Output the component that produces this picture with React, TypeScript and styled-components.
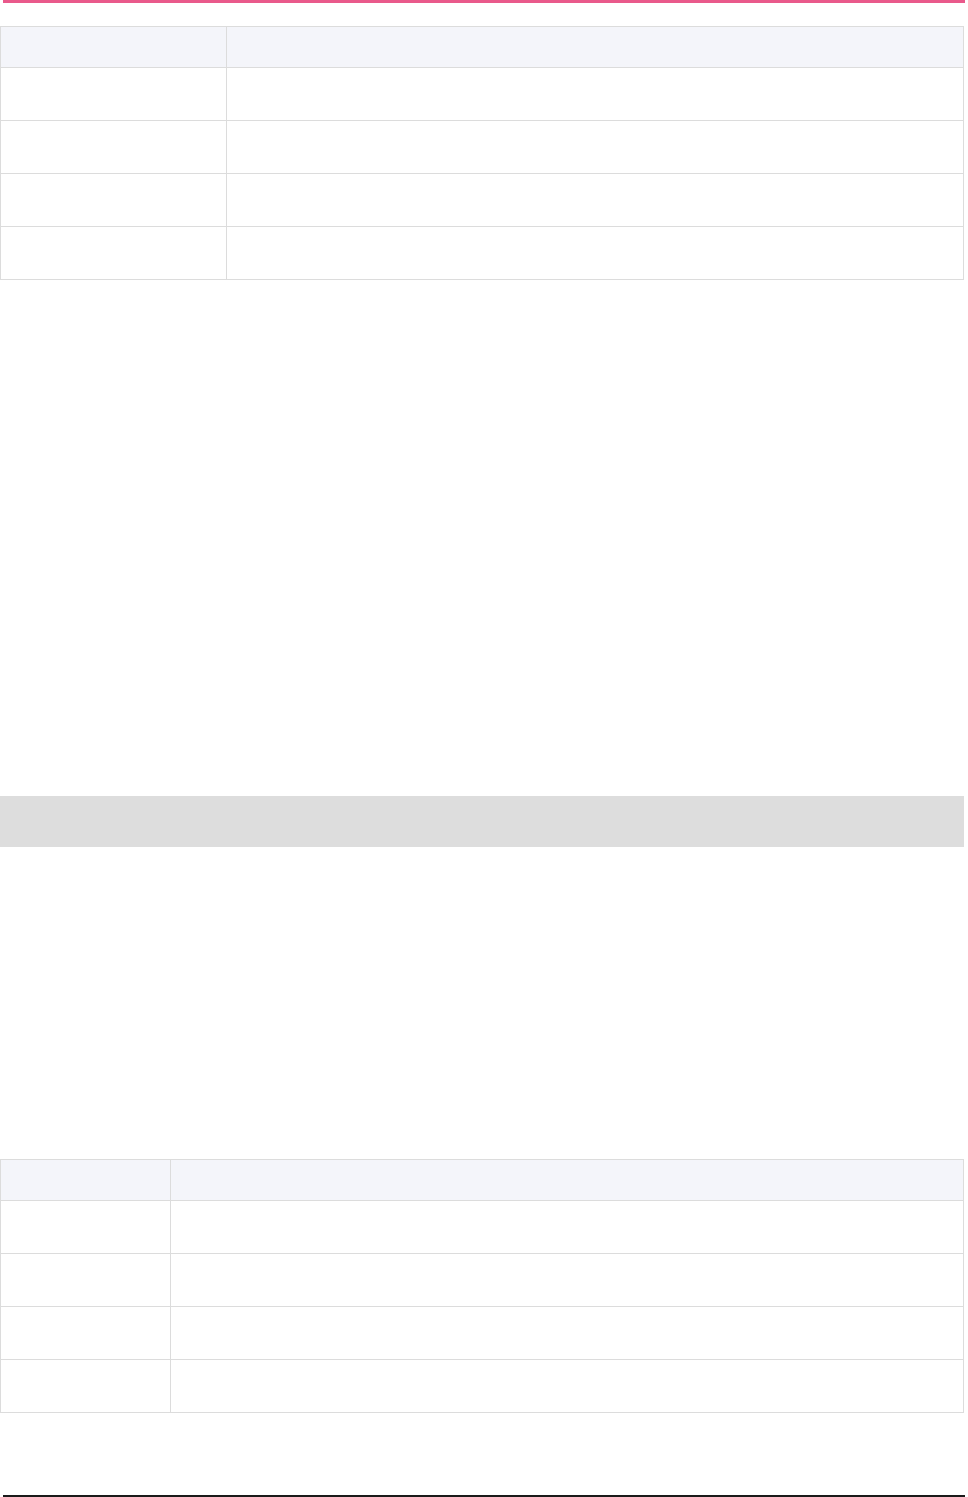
import React from "react";
import styled, { createGlobalStyle } from "styled-components";

const GlobalStyle = createGlobalStyle`
  html, body {
    margin: 0;
    padding: 0;
    background: #fff;
    font-family: "Inter", "Liberation Sans", sans-serif;
  }
`;

const Page = styled.div`
  width: 968px;
  display: flex;
  flex-direction: column;
`;

const AccentBar = styled.div`
  height: 3px;
  margin: 0 3px;
  background-color: #e9598b;
`;

const Table = styled.div<{ $first: number; $top: number }>`
  display: grid;
  grid-template-columns: ${(p) => p.$first}px 1fr;
  width: 964px;
  box-sizing: border-box;
  margin-top: ${(p) => p.$top}px;
  border-top: 1px solid #dcdcdc;
  border-left: 1px solid #dcdcdc;
`;

const Cell = styled.div<{ $head?: boolean }>`
  box-sizing: border-box;
  height: ${(p) => (p.$head ? 41 : 53)}px;
  border-right: 1px solid #dcdcdc;
  border-bottom: 1px solid #dcdcdc;
  background-color: ${(p) => (p.$head ? "#f4f5fa" : "#fff")};
  font-size: 14px;
  color: #333;
`;

const Banner = styled.div`
  width: 964px;
  height: 51px;
  margin-top: 516px;
  background-color: #dddddd;
`;

const Rule = styled.div`
  height: 2px;
  margin: 82px 3px 0;
  background-color: #1a1a1a;
`;

interface GridProps {
  first: number;
  top: number;
  rows: number;
}

const DataTable: React.FC<GridProps> = ({ first, top, rows }) => {
  const body = Array.from({ length: rows });
  return (
    <Table $first={first} $top={top}>
      <Cell $head />
      <Cell $head />
      {body.map((_, i) => (
        <React.Fragment key={i}>
          <Cell />
          <Cell />
        </React.Fragment>
      ))}
    </Table>
  );
};

const App: React.FC = () => {
  return (
    <>
      <GlobalStyle />
      <Page>
        <AccentBar />
        <DataTable first={226} top={23} rows={4} />
        <Banner />
        <DataTable first={170} top={312} rows={4} />
        <Rule />
      </Page>
    </>
  );
};

export default App;
